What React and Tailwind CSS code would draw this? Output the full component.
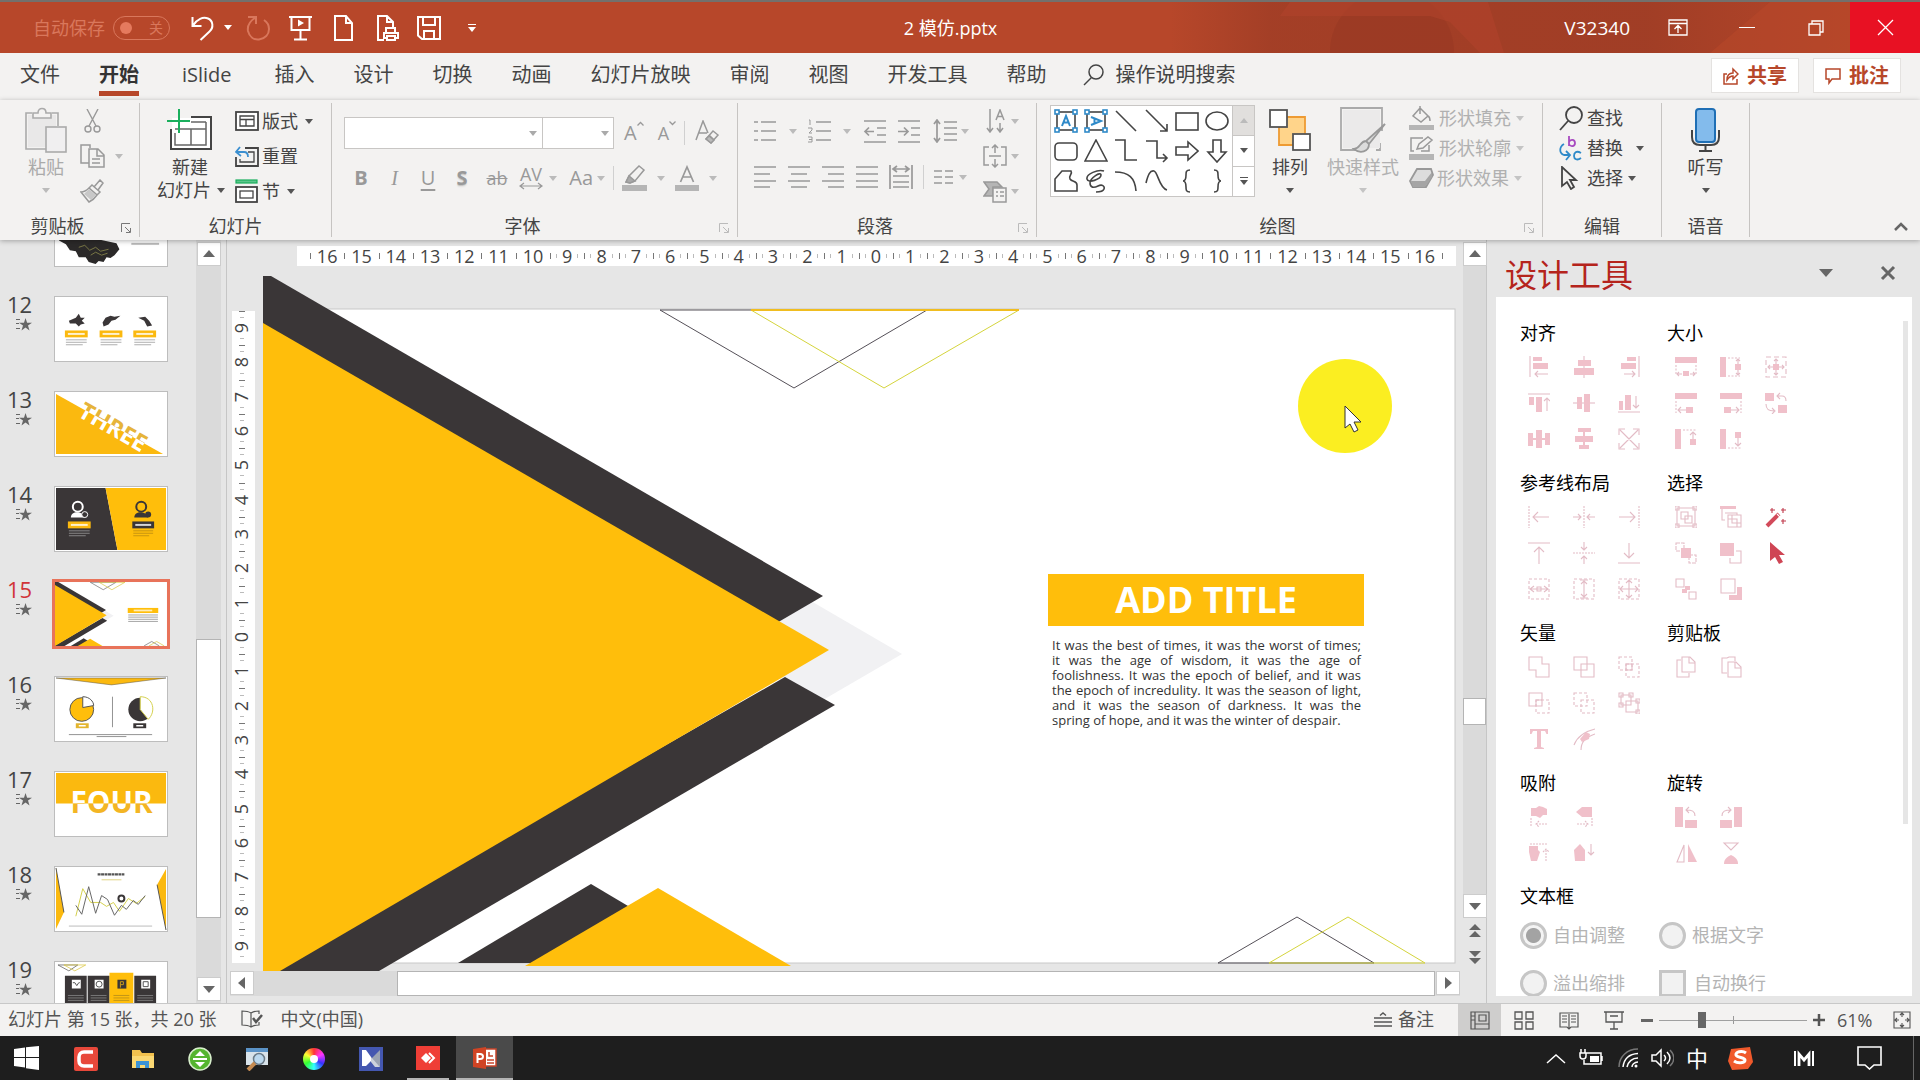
import { useState } from "react";

const TABS = ["文件", "开始", "iSlide", "插入", "设计", "切换", "动画", "幻灯片放映", "审阅", "视图", "开发工具", "帮助"];

function Svg({ w, h, vb, children, className = "", stroke = "currentColor", sw = 1.5, fill = "none" }) {
  return (
    <svg
      width={w}
      height={h}
      viewBox={vb || `0 0 ${w} ${h}`}
      fill={fill}
      stroke={stroke}
      strokeWidth={sw}
      className={`shrink-0 ${className}`}
      aria-hidden="true"
    >
      {children}
    </svg>
  );
}

function Caret({ className = "text-[#555]", up = false }) {
  return (
    <svg width="8" height="5" viewBox="0 0 8 5" className={`shrink-0 ${className}`} aria-hidden="true">
      <path d={up ? "M0 5h8L4 0z" : "M0 0h8L4 5z"} fill="currentColor" />
    </svg>
  );
}

/* ---------- title bar ---------- */

function TitleBar() {
  const [autoSave, setAutoSave] = useState(false);
  return (
    <header className="relative flex h-[53px] shrink-0 items-center border-t-2 border-[#73706c] bg-[#b7472a] text-white">
      <svg className="absolute top-0 right-[70px] h-full w-[680px]" viewBox="0 0 680 51" preserveAspectRatio="none" aria-hidden="true">
        <defs>
          <linearGradient id="fade" x1="0" x2="1">
            <stop offset="0" stopColor="#9d3c25" stopOpacity="0" />
            <stop offset="0.15" stopColor="#9d3c25" stopOpacity="0.75" />
            <stop offset="0.7" stopColor="#9d3c25" stopOpacity="0.85" />
            <stop offset="1" stopColor="#9d3c25" stopOpacity="0.1" />
          </linearGradient>
        </defs>
        <rect width="680" height="51" fill="url(#fade)" />
        <circle cx="222" cy="50" r="62" fill="#983923" opacity="0.6" />
        <path d="M110 14h150l20 6 30 31h24L318 0H120z" fill="#b0432b" opacity="0.6" />
        <path d="M540 51L600 0h80v51z" fill="#b7472a" opacity="0.6" />
      </svg>
      <div className="relative flex flex-1 items-center pl-[33px]">
        <label htmlFor="autosave" className="text-lg leading-6 text-[#d9775c]">自动保存</label>
        <button
          id="autosave"
          onClick={() => setAutoSave(!autoSave)}
          className="ml-2 flex h-6 w-[57px] items-center justify-between rounded-full border border-[#d9775c] px-1.5 text-sm text-[#d9775c]"
        >
          <span className="h-3 w-3 rounded-full bg-[#e57a5e]" />
          {autoSave ? "开" : "关"}
        </button>
        <button aria-label="撤销" className="ml-[21px] flex items-center gap-2.5">
          <Svg w={23} h={26} sw={2}><path d="M1.500 2v9h9M2 10.500C6 4 12 1.500 17 3.500s6 9 1.500 13L9.500 25" /></Svg>
          <Caret className="text-white" />
        </button>
        <button aria-label="重复" className="ml-[14px] text-[#d9775c]">
          <Svg w={25} h={26} sw={2}><path d="M2 2h8v7M9.500 2.500C4 6 1 10 2 16c1.500 6 6 9 11 8.500 6-1 10-5 10-10.500 0-4-2-7-5-9" /></Svg>
        </button>
        <button aria-label="从头开始" className="ml-[18px]">
          <Svg w={23} h={26} sw={2}><path d="M0 2h23M2.500 2v13h18V2M11.500 15v9M5 24.500h13" /><path d="M9 4.500v7l6-3.500z" fill="currentColor" stroke="none" /></Svg>
        </button>
        <button aria-label="新建" className="ml-[22px]">
          <Svg w={19} h={26} sw={2}><path d="M1 1h11l6 7v17H1zM12 1v7h6" /></Svg>
        </button>
        <button aria-label="快速打印" className="ml-[24px]">
          <Svg w={22} h={26} sw={2}><path d="M7 25H1V1h9l6 6v6M10 1v6h6M9 18v-5h9v5M9 23H7v-5h14v5h-2M10 21h8v4h-8z" /></Svg>
        </button>
        <button aria-label="保存" className="ml-[18px]">
          <Svg w={24} h={26} sw={2}><path d="M1 2h22v22H5l-4-3.500zM6 2v8h12V2M7 24v-8h10v8" /></Svg>
        </button>
        <button aria-label="自定义快速访问工具栏" className="ml-[27px] flex flex-col items-center gap-0.5">
          <span className="h-px w-2 bg-white" />
          <Caret className="text-white" />
        </button>
      </div>
      <h1 className="relative mr-[52px] text-lg leading-6">2 模仿.pptx</h1>
      <div className="relative flex h-full flex-1 items-center justify-end">
        <span className="text-[19px] leading-6">V32340</span>
        <button aria-label="功能区显示选项" className="ml-[38px]">
          <Svg w={20} h={17} sw={1.3}><path d="M1 1h18v15H1zM1 4.500h18M10 14V7M6.500 10L10 6.500l3.500 3.500" /></Svg>
        </button>
        <button aria-label="最小化" className="ml-[51px] flex h-6 w-4 items-center"><span className="block h-px w-full bg-white" /></button>
        <button aria-label="向下还原" className="ml-[53px]">
          <Svg w={16} h={16} sw={1.3}><path d="M1 4h11v11H1zM4 4V1h11v11h-3" /></Svg>
        </button>
        <button aria-label="关闭" className="ml-[26px] flex h-full w-[70px] items-center justify-center bg-[#e81123]">
          <Svg w={17} h={17} sw={1.3}><path d="M1 1l15 15M16 1L1 16" /></Svg>
        </button>
      </div>
    </header>
  );
}

function TabRow() {
  const [active, setActive] = useState("开始");
  return (
    <nav className="flex h-[47px] shrink-0 items-start bg-[#f3f2f1] pl-5 text-xl text-[#444]">
      <div className="flex gap-[39px] pt-1.5">
        {TABS.map((t) => (
          <button
            key={t}
            onClick={() => setActive(t)}
            className={`border-b-[5px] leading-8 ${t === "iSlide" ? "mx-1" : ""} ${
              t === active ? "border-[#b7472a] font-bold text-[#333]" : "border-transparent"
            }`}
          >
            {t}
          </button>
        ))}
      </div>
      <button className="ml-9 flex items-center gap-3 pt-1.5 leading-8">
        <Svg w={21} h={22} sw={1.5}><circle cx="13" cy="8" r="7" /><path d="M8.500 13.500L1 21" /></Svg>
        操作说明搜索
      </button>
      <div className="ml-auto flex gap-[14px] pt-[5px] pr-[19px] font-bold text-[#b7472a]">
        <button className="flex h-[35px] w-[88px] items-center justify-center gap-2 border border-[#e4e2e0] bg-white">
          <Svg w={16} h={18} sw={1.5}><path d="M4 7H1v10h13v-5M4 13c0-5 2-7 6-7V2l5 5-5 5V9c-3 0-4 1-6 4z" /></Svg>
          共享
        </button>
        <button className="flex h-[35px] w-[88px] items-center justify-center gap-2 border border-[#e4e2e0] bg-white">
          <Svg w={16} h={18} sw={1.5}><path d="M1 2h14v10H7l-3 4v-4H1z" /></Svg>
          批注
        </button>
      </div>
    </nav>
  );
}

/* ---------- ribbon ---------- */

function Group({ label, width, launcher, dim = true, children }) {
  return (
    <section className={`flex shrink-0 flex-col pt-[3px] ${width}`}>
      <div className="flex min-h-0 flex-1 flex-col border-r border-[#c6c4c2]">
        <div className="flex-1">{children}</div>
        <div className={`relative h-[23px] text-center text-lg leading-6 text-[#444] ${launcher ? "pr-6" : ""}`}>
          {label}
          {launcher && (
            <button aria-label={`${label}设置`} className={`absolute right-2 bottom-1 ${dim ? "text-[#bbb]" : "text-[#777]"}`}>
              <Svg w={10} h={10} sw={1}><path d="M.5 9V.5H9M4 4l5 5M9.500 5v4.500H5" /></Svg>
            </button>
          )}
        </div>
      </div>
    </section>
  );
}

function BigButton({ icon, lines, caret, color = "text-[#444]", className = "" }) {
  return (
    <button className={`flex shrink-0 flex-col items-center self-start pt-[5px] text-lg leading-[23px] ${color} ${className}`}>
      <span className="mb-1 flex h-11 items-center">{icon}</span>
      <span className="whitespace-nowrap">{lines}</span>
      {caret && <span className="flex h-[23px] items-center"><Caret className={caret} /></span>}
    </button>
  );
}

function RowButton({ icon, text, caret, color = "text-[#444]", gap = "gap-1" }) {
  return (
    <button className={`flex h-[30px] items-center whitespace-nowrap text-lg leading-6 ${gap} ${color}`}>
      {icon}
      <span>{text}</span>
      {caret && <Caret className={caret} />}
    </button>
  );
}

function ClipboardGroup() {
  return (
    <Group label="剪贴板" width="w-[140px]" launcher dim={false}>
      <div className="flex pl-[25px]">
        <BigButton
          color="text-[#aaa]"
          lines="粘贴"
          caret="text-[#bbb]"
          icon={
            <Svg w={42} h={46} sw={1.6}>
              <path d="M7 6H1v36h20M27 6h6v13" />
              <path d="M3 8h28v12H21v20H3z" fill="#e9e8e8" stroke="none" />
              <path d="M8 11V6h5c0-6 8-6 8 0h5v5z" fill="#f3f2f1" />
              <rect x="21" y="20" width="20" height="25" fill="#f0eff0" />
            </Svg>
          }
        />
        <div className="flex flex-col gap-[11px] pt-1.5 pl-[13px] text-[#999]">
          <button aria-label="剪切" className="flex h-6 w-6 justify-center">
            <Svg w={17} h={24} sw={1.4}><path d="M3 0l9 17M14 0L5 17" /><circle cx="4" cy="20" r="3" /><circle cx="13" cy="20" r="3" /></Svg>
          </button>
          <button aria-label="复制" className="flex h-6 items-center gap-2.5">
            <Svg w={25} h={24} sw={1.5}><path d="M9 19H1V1h9v3M9 5h9l6 6v12H9zM17 5v7h7M12 15h8M12 19h8" /></Svg>
            <Caret className="text-[#bbb]" />
          </button>
          <button aria-label="格式刷" className="flex h-6">
            <Svg w={24} h={24} sw={1.5}><path d="M1 13c4 0 6-2 8-4l8 7c-2 3-4 5-8 7zM9 9l3-3 8 7-3 3M14 8l6-7 3 3-5 7" /><path d="M4 15l7 6 5-5-7-6z" fill="#c8c8c8" stroke="none" /></Svg>
          </button>
        </div>
      </div>
    </Group>
  );
}

function SlidesGroup() {
  return (
    <Group label="幻灯片" width="w-[192px]">
      <div className="flex pl-[15px]">
        <BigButton
          lines={
            <>
              新建
              <span className="flex items-center gap-1.5 pl-0.5">幻灯片 <Caret /></span>
            </>
          }
          icon={
            <Svg w={46} h={42} sw={2}>
              <rect x="5" y="9" width="39" height="31" fill="#fff" stroke="none" />
              <path d="M24 8h20v32H4V20" stroke="#444" />
              <path d="M24 13h15M8 20h31M24 20v16M8 24v12h31V13" stroke="#666" strokeWidth="1.500" />
              <path d="M0 12h23M12 0v24" stroke="#1aaf5d" />
            </Svg>
          }
        />
        <div className="flex flex-col gap-[5px] pt-[3px] pl-2.5">
          <RowButton
            text="版式"
            gap="gap-[3px]"
            caret="ml-1 text-[#555]"
            icon={<Svg w={24} h={20} sw={1.8}><rect x="1" y="1" width="22" height="18" fill="#fff" /><path d="M5 5h14v10H5zM5 8.500h14M11 8.500V15" strokeWidth="1.300" /></Svg>}
          />
          <RowButton
            text="重置"
            gap="gap-[3px]"
            icon={
              <Svg w={24} h={21} sw={1.8}>
                <path d="M10 2h13v18H1v-9" /><path d="M13 6h6v10H5v-3" strokeWidth="1.300" />
                <path d="M1 6h8c3 0 4 2 4 5M5 1L1 6l5 4" stroke="#3b8fd0" />
              </Svg>
            }
          />
          <RowButton
            text="节"
            gap="gap-[3px]"
            caret="ml-1 text-[#555]"
            icon={<Svg w={24} h={24} sw={1.8}><rect x="1" y="1" width="21" height="3" fill="#5dc58c" stroke="#1aaf5d" strokeWidth="1.200" /><rect x="1" y="8" width="21" height="15" fill="#fff" /><rect x="5" y="12" width="13" height="7" strokeWidth="1.300" /></Svg>}
          />
        </div>
      </div>
    </Group>
  );
}

function FontGroup() {
  return (
    <Group label="字体" width="w-[406px]" launcher>
      <div className="flex flex-col gap-[15px] pt-3.5 pl-3 text-[#999]">
        <div className="flex h-8 items-center">
          <span className="relative flex items-center">
            <select aria-label="字体" className="h-8 w-[199px] appearance-none border border-[#c8c6c4] bg-white"><option /></select>
            <Caret className="pointer-events-none absolute right-[6px] text-[#aaa]" />
          </span>
          <span className="relative -ml-px flex items-center">
            <select aria-label="字号" className="h-8 w-[72px] appearance-none border border-[#c8c6c4] bg-white"><option /></select>
            <Caret className="pointer-events-none absolute right-[5px] text-[#aaa]" />
          </span>
          <button aria-label="增大字号" className="ml-2.5 flex text-xl leading-6">A<Svg w={7} h={5} sw={1.3}><path d="M.5 4.500l3-3 3 3" /></Svg></button>
          <button aria-label="减小字号" className="ml-3.5 flex text-lg leading-6">A<Svg w={7} h={5} sw={1.3}><path d="M.5 .5l3 3 3-3" /></Svg></button>
          <span className="ml-2 h-6 w-px bg-[#d0d0d0]" />
          <button aria-label="清除格式" className="ml-2.5">
            <Svg w={25} h={26} sw={1.5}><path d="M1 20L8 1l5 12M4 13h8" /><path d="M11 19l7-8 5 4-7 8zM14 15l5 5" /><path d="M11 19l3-3 5 4-3 3z" fill="#bbb" /></Svg>
          </button>
        </div>
        <div className="flex h-7 items-center text-xl leading-6">
          <button className="w-[34px] font-bold">B</button>
          <button className="w-[33px] font-['Liberation_Serif',serif] italic">I</button>
          <button className="w-[34px] underline underline-offset-4">U</button>
          <button className="w-[34px] font-bold text-shadow-sm">S</button>
          <button className="w-[36px] text-lg line-through">ab</button>
          <button className="flex w-[42px] items-center justify-between pl-1 text-lg leading-4">
            <span className="flex flex-col">AV<Svg w={24} h={8} sw={1.2}><path d="M1 4h22M5 1L1 4l4 3M19 1l4 3-4 3" /></Svg></span>
            <Caret className="text-[#bbb]" />
          </button>
          <button className="flex w-[48px] items-center justify-end gap-1">Aa<Caret className="text-[#bbb]" /></button>
          <span className="mx-2 h-6 w-px bg-[#d0d0d0]" />
          <button aria-label="突出显示" className="flex items-center gap-2.5">
            <Svg w={25} h={26} sw={1.5}><path d="M4 17l3-6L17 1l5 4-9 11-5 2z" /><path d="M4 17l3-6 6 5-5 2z" fill="#aaa" /><rect y="20" width="25" height="6" fill="#b5b5b5" stroke="none" /></Svg>
            <Caret className="text-[#bbb]" />
          </button>
          <button aria-label="字体颜色" className="ml-2.5 flex items-center gap-2.5">
            <Svg w={24} h={26} sw={1.7}><path d="M5.500 17L12 2l6.500 15M8 12h8" /><rect y="20" width="24" height="6" fill="#b5b5b5" stroke="none" /></Svg>
            <Caret className="text-[#bbb]" />
          </button>
        </div>
      </div>
    </Group>
  );
}

function Lines({ d, children }) {
  return <Svg w={24} h={24} sw={1.7}><path d={d} />{children}</Svg>;
}

function ParagraphGroup() {
  return (
    <Group label="段落" width="w-[299px]" launcher>
      <div className="flex pl-[15px] text-[#999]">
        <div className="flex w-[226px] flex-col gap-[22px] pt-4">
          <div className="flex items-center">
            <button aria-label="项目符号" className="flex w-[54px] items-center gap-3">
              <Lines d="M8 3h15M8 12h15M8 21h15M1 3h4M1 12h4M1 21h4" /><Caret className="text-[#bbb]" />
            </button>
            <button aria-label="编号" className="flex w-[56px] items-center gap-3">
              <Lines d="M9 3h15M9 12h15M9 21h15"><path d="M2 1h1v5M1 9h4v2l-3 3h3M1 18h4v5H1M2 20.500h3" strokeWidth="1" /></Lines><Caret className="text-[#bbb]" />
            </button>
            <button aria-label="减少缩进" className="mr-2.5"><Lines d="M1 2h22M14 9h9M14 16h9M1 23h22M11 12.500H2M6 8.500l-4 4 4 4" /></button>
            <button aria-label="增加缩进" className="mr-3"><Lines d="M1 2h22M14 9h9M14 16h9M1 23h22M1 12.500h9M7 8.500l4 4-4 4" /></button>
            <button aria-label="行距" className="flex items-center gap-1">
              <Lines d="M11 3h13M11 9h13M11 15h13M11 21h13M4 1v22M1 5l3-4 3 4M1 19l3 4 3-4" /><Caret className="text-[#bbb]" />
            </button>
          </div>
          <div className="flex items-center gap-[10px]">
            <button aria-label="左对齐"><Lines d="M1 2h22M1 9h16M1 16h22M1 22h16" /></button>
            <button aria-label="居中"><Lines d="M1 2h22M4 9h16M1 16h22M4 22h16" /></button>
            <button aria-label="右对齐"><Lines d="M1 2h22M7 9h16M1 16h22M7 22h16" /></button>
            <button aria-label="两端对齐"><Lines d="M1 2h22M1 9h22M1 16h22M1 22h22" /></button>
            <button aria-label="分散对齐"><Lines d="M1 0v24M23 0v24M4 11h16M4 17h16M4 22h16M4 4h16M8 1L4 4l4 3M16 1l4 3-4 3" /></button>
            <span className="h-6 w-px bg-[#d0d0d0]" />
            <button aria-label="分栏" className="flex items-center gap-1.5">
              <Svg w={19} h={16} sw={1.5}><path d="M0 2h8M0 8h8M0 14h8M11 2h8M11 8h8M11 14h8" /></Svg><Caret className="text-[#bbb]" />
            </button>
          </div>
        </div>
        <div className="flex flex-col gap-[11px] pt-1.5 pl-1">
          <button aria-label="文字方向" className="flex items-center gap-1">
            <Svg w={24} h={24} sw={1.5}><path d="M7 0v23M4 19l3 4 3-4M17 14v9M14 19l3 4 3-4M13 11l4-10 4 10M14.500 7.500h5" /></Svg><Caret className="text-[#bbb]" />
          </button>
          <button aria-label="对齐文本" className="flex items-center gap-1">
            <Svg w={24} h={24} sw={1.5}><path d="M6 3H1v18h5M18 3h5v18h-5M6 12h12M12 1v8M9 4l3-3 3 3M12 15v8M9 20l3 3 3-3" /></Svg><Caret className="text-[#bbb]" />
          </button>
          <button aria-label="转换为 SmartArt" className="flex items-center gap-1">
            <Svg w={24} h={24} sw={1.5}><path d="M1 3h13l5 5h-9v9H1l5-7z" fill="#b5b5b5" /><path d="M10 9h13v14H10zM13 13h2M17 13h4M13 17h2M17 17h4" fill="#f3f2f1" /></Svg><Caret className="text-[#bbb]" />
          </button>
        </div>
      </div>
    </Group>
  );
}

const SHAPES = [
  <g key="tb"><rect x="3" y="3" width="18" height="18" /><path d="M8 17l4-10 4 10M9.500 13.500h5" stroke="#2f8ac9" strokeWidth="2" /><g stroke="#2f8ac9" fill="#fff"><rect x="1" y="1" width="4" height="4" /><rect x="19" y="1" width="4" height="4" /><rect x="1" y="19" width="4" height="4" /><rect x="19" y="19" width="4" height="4" /></g></g>,
  <g key="vb"><rect x="3" y="3" width="18" height="18" /><path d="M7 8l10 4-10 4M10.500 9.500v5" stroke="#2f8ac9" strokeWidth="2" /><g stroke="#2f8ac9" fill="#fff"><rect x="1" y="1" width="4" height="4" /><rect x="19" y="1" width="4" height="4" /><rect x="1" y="19" width="4" height="4" /><rect x="19" y="19" width="4" height="4" /></g></g>,
  <path key="ln" d="M2 2l20 20" />,
  <path key="ar" d="M1 1l21 21M22 15v7h-7" />,
  <rect key="re" x="1" y="4" width="22" height="17" />,
  <ellipse key="el" cx="12" cy="12" rx="11" ry="9" />,
  <rect key="rr" x="1" y="4" width="22" height="17" rx="4" />,
  <path key="tr" d="M12 1l11 21H1z" />,
  <path key="el1" d="M1 1h10v20h12" />,
  <path key="el2" d="M1 2h11v17h10M18 15l4 4-4 4" />,
  <path key="ra" d="M1 8h12V3l10 9-10 9v-5H1z" />,
  <path key="da" d="M8 1v12H3l9 10 9-10h-5V1z" />,
  <path key="ff" d="M1 22V10l7-8h9c2 3-3 5-1 8s7 2 7 6v6z" />,
  <path key="sc" d="M20 2C14 0 2 5 3 10s14 0 14-4S6 9 6 14s4 5 8 3 7 0 6 3-6 3-8 3" />,
  <path key="cv" d="M1 3c14 0 20 6 21 19" />,
  <path key="wv" d="M1 14C3 6 5 1 9 2s5 17 13 19" />,
  <path key="lb" d="M15 1c-4 0-4 2-4 5s0 6-3 6c3 0 3 3 3 6s0 5 4 5" />,
  <path key="rb" d="M9 1c4 0 4 2 4 5s0 6 3 6c-3 0-3 3-3 6s0 5-4 5" />,
];

function DrawingGroup() {
  return (
    <Group label="绘图" width="w-[506px]" launcher>
      <div className="flex pl-[13px]">
        <div className="mt-0.5 flex h-[92px] w-[205px] border border-[#c8c6c4] bg-white">
          <div className="grid flex-1 grid-cols-6 place-items-center text-[#444]">
            {SHAPES.map((s, i) => (
              <button key={i} aria-label={`形状 ${i + 1}`}><Svg w={24} h={24} sw={1.6}>{s}</Svg></button>
            ))}
          </div>
          <div className="flex w-[22px] flex-col border-l border-[#c8c6c4]">
            <button aria-label="上一行" className="flex flex-1 items-center justify-center bg-[#e1dfdd]"><Caret up className="text-[#bbb]" /></button>
            <button aria-label="下一行" className="flex flex-1 items-center justify-center border-y border-[#c8c6c4]"><Caret /></button>
            <button aria-label="其他" className="flex flex-1 flex-col items-center justify-center gap-0.5"><span className="h-px w-2 bg-[#555]" /><Caret /></button>
          </div>
        </div>
        <BigButton
          className="ml-3.5"
          lines="排列"
          caret="text-[#555]"
          icon={<Svg w={42} h={42} sw={1.8}><path d="M16 8h20v28H10V16z" fill="#ffd48a" stroke="#ee9b33" /><rect x="1" y="1" width="17" height="17" fill="#fff" stroke="#555" /><rect x="24" y="25" width="17" height="16" fill="#fff" stroke="#555" /></Svg>}
        />
        <BigButton
          className="ml-4"
          color="text-[#b0b0b0]"
          lines="快速样式"
          caret="text-[#c4c4c4]"
          icon={<Svg w={46} h={46} sw={1.8} stroke="#aaa"><path d="M42 24V1H1v42h20M40 36v7h-4" /><rect x="3" y="3" width="37" height="38" fill="#ebeaea" stroke="none" /><path d="M45 17L26 34l3 3zM26 34c-6 0-6 8-12 8 6 5 15 3 15-5z" fill="#dcdcdc" stroke="#999" /></Svg>}
        />
        <div className="flex flex-col pl-2.5">
          <RowButton color="text-[#b0b0b0]" gap="gap-[5px]" text="形状填充" caret="text-[#c4c4c4]"
            icon={<Svg w={25} h={24} sw={1.5}><path d="M11 2l8 8-7 6-8-6zM11 0v8M19 10c2 1 2 3 2 5" stroke="#999" /><rect y="19" width="25" height="5" fill="#b5b5b5" stroke="none" /></Svg>} />
          <RowButton color="text-[#b0b0b0]" gap="gap-[5px]" text="形状轮廓" caret="text-[#c4c4c4]"
            icon={<Svg w={25} h={24} sw={1.5}><path d="M14 2H2v13h3M20 9v6h-8M8 13l2-5L19 1l4 3-9 8z" stroke="#999" /><rect y="18" width="25" height="6" fill="#b5b5b5" stroke="none" /></Svg>} />
          <RowButton color="text-[#b0b0b0]" gap="gap-[3px]" text="形状效果" caret="ml-0.5 text-[#c4c4c4]"
            icon={<Svg w={25} h={22} sw={1.8}><path d="M1 14L8 2h14l2 6-7 12H4z" stroke="#999" fill="#ddd" /><path d="M2 14h14l7-9v5l-7 10H4z" fill="#a5a5a5" stroke="none" /></Svg>} />
        </div>
      </div>
    </Group>
  );
}

function EditGroups() {
  return (
    <>
      <Group label="编辑" width="w-[119px]">
        <div className="flex flex-col pl-4">
          <RowButton text="查找" gap="gap-[3px]" icon={<Svg w={25} h={25} sw={1.8}><circle cx="15" cy="9" r="8" /><path d="M9 15L1 24" /></Svg>} />
          <RowButton
            text="替换"
            gap="gap-[3px]"
            caret="ml-2.5 text-[#555]"
            icon={
              <Svg w={25} h={26} sw={1.8}>
                <path d="M10 1v10M10 7c1-3 6-3 6 1s-5 4-6 1" stroke="#a84bc0" />
                <path d="M22 18c-5-3-7 0-7 3s3 5 7 2M5 9c-5 3-5 9 0 11h5M7 16l4 4-4 5" stroke="#2f8ac9" />
              </Svg>
            }
          />
          <RowButton text="选择" gap="gap-[3px]" caret="ml-0.5 text-[#555]" icon={<Svg w={25} h={24} sw={1.8}><path d="M3 1v19l5-4 4 7 3-2-4-7h6z" /></Svg>} />
        </div>
      </Group>
      <Group label="语音" width="w-[88px]">
        <div className="flex justify-center">
          <BigButton
            lines="听写"
            caret="text-[#555]"
            icon={<Svg w={30} h={44} sw={2}><rect x="5" y="1" width="19" height="33" rx="3" fill="#83bbec" stroke="#1f6fb5" /><path d="M1 22v7c0 5 3 8 8 8h11c5 0 8-3 8-8v-7M14.500 37v6M8 43h13" stroke="#444" /></Svg>}
          />
        </div>
      </Group>
    </>
  );
}

function Ribbon() {
  return (
    <div className="relative z-10 flex h-[140px] shrink-0 bg-[#f3f2f1] pb-[3px] shadow-[0_1px_5px_rgba(0,0,0,0.3)]">
      <ClipboardGroup />
      <SlidesGroup />
      <FontGroup />
      <ParagraphGroup />
      <DrawingGroup />
      <EditGroups />
      <button aria-label="折叠功能区" className="mt-auto mr-3 mb-1.5 ml-auto text-[#666]">
        <Svg w={14} h={9} sw={2.5}><path d="M1 8l6-6 6 6" /></Svg>
      </button>
    </div>
  );
}

/* ---------- slide drawing, shared by the canvas and the thumbnail ---------- */

function SlideArt() {
  return (
    <>
      <rect x="294" y="309" width="1161" height="654" fill="#fff" stroke="#c8c8c8" />
      <path d="M902 654L780 583v142z" fill="#f1f1f3" />
      <path d="M263 276h8L823 596l-60 35L263 340z" fill="#3a3637" />
      <path d="M785 677l50 28L379 971H270z" fill="#3a3637" />
      <path d="M263 323L829 650 280 971h-17z" fill="#ffbe0b" />
      <path d="M458 963l133-79 133 79z" fill="#3a3637" />
      <path d="M525 966l133-78 133 78z" fill="#ffbe0b" />
      <path d="M660 310h267L794 388z" fill="none" stroke="#555058" />
      <path d="M751 310h268L884 388z" fill="none" stroke="#d4d43c" />
      <path d="M751 310h268" stroke="#f0bd20" strokeWidth="2" />
      <path d="M1218 963l79-46 77 46z" fill="none" stroke="#555058" />
      <path d="M1269 963l79-46 77 46z" fill="none" stroke="#d4d43c" />
    </>
  );
}

/* ---------- thumbnails ---------- */

function Caption({ x, y, w, fill, line = "#999" }) {
  return (
    <>
      <rect x={x} y={y} width={w} height="7" fill={fill} />
      <path d={`M${x + 3} ${y + 3.5}h${w - 6}`} stroke="#fff" strokeOpacity="0.8" strokeWidth="2" />
      <path d={`M${x + 1} ${y + 9.5}h${w - 2}M${x + 1} ${y + 12}h${w - 2}M${x + 1} ${y + 14.500}h${w - 6}`} stroke={line} strokeWidth="0.800" />
    </>
  );
}

const THUMBS = [
  {
    n: 11,
    art: (
      <>
        <path d="M8 34l10 3 14-2 12 3 18 4 3 6-5 6-4 3-4-1-3 5-5-1-3 3-7-2-3-5-7 0-3-6-6-1-4-6-7-4z" fill="#2b2929" />
        <path d="M24 46l6-2 5 5 6-3 5 4 8-2M36 54l5-3 6 3 6-2" stroke="#8d8a4c" strokeWidth="0.800" fill="none" />
        <path d="M77 42.500h28" stroke="#bbb" strokeWidth="2" />
      </>
    ),
  },
  {
    n: 12,
    art: (
      <>
        <path d="M14 24l7-3 3-4 2 4 4 0-3 3 3 3-4 1-2 2-3-3-6 0z" fill="#3a3637" />
        <path d="M48 26l3-5 5-2 4 1 6-1-5 4-4 1-3 4-5 2z" fill="#3a3637" />
        <path d="M84 21l7-1 4 4 3 5-5 1-3-6z" fill="#3a3637" />
        <Caption x={10} y={34} w={23} fill="#fbb90f" />
        <Caption x={45} y={34} w={23} fill="#fbb90f" />
        <Caption x={79} y={34} w={23} fill="#fbb90f" />
      </>
    ),
  },
  {
    n: 13,
    art: (
      <>
        <defs>
          <clipPath id="lower"><path d="M0 1L110 63H0z" /></clipPath>
        </defs>
        <path d="M1 2l108 61H1z" fill="#fbb90f" />
        <g fontSize="24" fontWeight="bold">
          <text transform="translate(22 24) rotate(30)" fill="#e6b43a">THREE</text>
          <g clipPath="url(#lower)"><text transform="translate(22 24) rotate(30)" fill="#fff">THREE</text></g>
        </g>
      </>
    ),
  },
  {
    n: 14,
    art: (
      <>
        <path d="M1 1h50l12 63H1z" fill="#3a3637" />
        <path d="M51 1h61v63H63z" fill="#ffbe0b" />
        <circle cx="23" cy="20" r="5" fill="none" stroke="#fff" strokeWidth="2" />
        <path d="M16 31c0-7 12-7 14 0z" fill="#fff" />
        <circle cx="30" cy="28" r="3" fill="#3a3637" stroke="#fff" />
        <circle cx="87" cy="20" r="5" fill="#ffbe0b" stroke="#3a3637" strokeWidth="2" />
        <path d="M80 31c0-7 12-7 14 0z" fill="#3a3637" />
        <circle cx="94" cy="28" r="3" fill="#3a3637" />
        <Caption x={13} y={35} w={23} fill="#fbb90f" />
        <Caption x={78} y={35} w={22} fill="#3a3637" line="#b98a12" />
      </>
    ),
  },
  {
    n: 15,
    view: "294 309 1161 654",
    art: (
      <>
        <SlideArt />
        <rect x="1048" y="574" width="316" height="52" fill="#ffbe0b" />
        <path d="M1110 600h192" stroke="#fff" strokeWidth="18" strokeOpacity="0.7" />
        <path d="M1053 646h308M1053 668h308M1053 690h308M1053 712h308" stroke="#999" strokeWidth="9" />
        <path d="M660 312h267L794 388zM1218 961l79-44 77 44" fill="none" stroke="#777" strokeWidth="7" />
        <path d="M751 312h268L884 388zM1269 961l79-44 77 44" fill="none" stroke="#dcc94a" strokeWidth="7" />
      </>
    ),
  },
  {
    n: 16,
    art: (
      <>
        <path d="M1 1h111L57 8z" fill="#fbb90f" stroke="#555" strokeWidth="0.500" />
        <circle cx="27" cy="33" r="12" fill="#ffbe0b" stroke="#555" />
        <path d="M28 31V20c7 0 11 5 11 9z" fill="#fff" stroke="#555" />
        <circle cx="86" cy="33" r="12" fill="#3a3637" />
        <path d="M86 33V20c14 0 16 16 8 23z" fill="#fff" stroke="#d3cf4c" />
        <path d="M58 20v31M14 58.500h84M42 60.500h30" stroke="#777" strokeWidth="0.800" />
        <rect x="21" y="47" width="13" height="5" fill="#e3b52f" />
        <rect x="79" y="47" width="13" height="5" fill="#3a3637" />
        <path d="M24 49.500h7M82 49.500h7" stroke="#fff" strokeWidth="1.500" />
      </>
    ),
  },
  {
    n: 17,
    art: (
      <>
        <defs>
          <clipPath id="upperHalf"><path d="M0 0h113v32H0z" /></clipPath>
          <clipPath id="lowerHalf"><path d="M0 32h113v33H0z" /></clipPath>
        </defs>
        <path d="M1 1h111v31H1z" fill="#fbb90f" />
        <g fontSize="30" fontWeight="bold" textAnchor="middle">
          <g clipPath="url(#upperHalf)"><text x="57" y="42" fill="#fff">FOUR</text></g>
          <g clipPath="url(#lowerHalf)"><text x="57" y="42" fill="#f3b524">FOUR</text></g>
        </g>
      </>
    ),
  },
  {
    n: 18,
    art: (
      <>
        <path d="M1 1l8 45-8 17z" fill="#fbb90f" />
        <path d="M1 1l8 45" stroke="#555" />
        <path d="M112 2l-9 16 9 46z" fill="#fbb90f" />
        <path d="M103 18l9 46" stroke="#555" />
        <path d="M43 7.500h27" stroke="#555" strokeWidth="2.500" strokeDasharray="3 0.500" />
        <path d="M47 13h20" stroke="#d8c866" strokeWidth="0.800" />
        <path d="M21 50l7-28 8 14 10 0 6 4 7-4 6 9 9-13 8 5 9-7" fill="none" stroke="#d3cf4c" />
        <path d="M21 39l6 9 7-28 7 27 6-18 6 4 7 16 7-10 5 4 7-9 5 4 7-9" fill="none" stroke="#666" />
        <circle cx="67" cy="32" r="3" fill="#fff" stroke="#3a3637" strokeWidth="2" />
        <path d="M14 60h84" stroke="#aaa" strokeWidth="0.800" />
      </>
    ),
  },
  {
    n: 19,
    art: (
      <>
        <path d="M3 3h20L14 9z" fill="none" stroke="#666" strokeWidth="0.800" />
        <path d="M9 3h22L20 9z" fill="none" stroke="#dcc94a" strokeWidth="0.800" />
        <path d="M10 14h22v42H10zM33 14h22v42H33zM80 14h22v42H80z" fill="#3a3637" />
        <path d="M55 11h24v45H55z" fill="#ffbe0b" />
        <path d="M17 18h9v9h-9zM40 18h9v9h-9zM87 18h9v9h-9z" fill="#fff" />
        <path d="M18 21h2l2 3 2-3h1M89 25v-5l5 0v5z" stroke="#555" fill="none" />
        <circle cx="44.500" cy="22.500" r="3" stroke="#555" fill="none" />
        <path d="M63 18h9v9h-9z" fill="#3a3637" />
        <path d="M66 26v-6h3v3h-3" stroke="#c99a1c" fill="none" />
        <path d="M13 34h16M13 36.500h16M13 39h16M36 34h16M36 36.500h16M36 39h16M83 34h16M83 36.500h16M83 39h16" stroke="#888" strokeWidth="0.800" />
        <path d="M59 34h16M59 36.500h16M59 39h16" stroke="#b38c1a" strokeWidth="0.800" />
      </>
    ),
  },
];

function ArrowBox({ dir, label, className = "" }) {
  const d = { up: "M0 9h12L6 2z", down: "M0 3h12l-6 7z", left: "M9 0v12L2 6z", right: "M3 0v12l7-6z" }[dir];
  return (
    <button aria-label={label} className={`flex h-6 w-6 shrink-0 items-center justify-center border border-[#ccc] bg-white ${className}`}>
      <svg width="12" height="12" viewBox="0 0 12 12" aria-hidden="true"><path d={d} fill="#666" /></svg>
    </button>
  );
}

function ThumbPanel() {
  const [current, setCurrent] = useState(15);
  return (
    <aside className="flex w-[227px] shrink-0 border-r border-[#c6c6c6]">
      <ol className="min-h-0 flex-1 overflow-hidden">
        {THUMBS.map((t, i) => (
          <li key={t.n} className={`flex h-[95px] items-start ${i === 0 ? "-mt-[41px]" : ""}`}>
            <div className={`w-[52px] pl-[7px] text-[22px] leading-5 ${t.n === current ? "text-[#d13438]" : "text-[#444]"}`}>
              {/* the first row is scrolled half out, its number with it */}
              {i > 0 && (
                <>
                  {t.n}
                  <Svg w={16} h={13} className="mt-1 ml-[9px] text-[#666]" fill="currentColor" stroke="none">
                    <path d="M9.500 0l1.600 4.700H16l-4 2.900 1.500 4.900-4-3-4 3L7 7.600 3 4.700h5z" /><path d="M0 1h4v1H0zM0 5h3v1H0zM0 10h4v1H0z" />
                  </Svg>
                </>
              )}
            </div>
            <button
              aria-label={`幻灯片 ${t.n}`}
              onClick={() => setCurrent(t.n)}
              className={t.n === current ? "border-[3px] border-[#e8735a] bg-white" : "mt-[2px] ml-[2px] border border-[#bdbdbd] bg-white"}
            >
              <svg width="112" height="64" viewBox={t.view || "0 0 113 65"} preserveAspectRatio="none" aria-hidden="true">{t.art}</svg>
            </button>
          </li>
        ))}
      </ol>
      <div className="mr-[5px] flex w-[25px] flex-col items-center bg-[#dadada] pt-0.5 pb-0.5">
        <ArrowBox dir="up" label="向上滚动" />
        <div className="mt-[373px] h-[279px] w-full border border-[#b4b4b4] bg-white" />
        <ArrowBox dir="down" label="向下滚动" className="mt-auto" />
      </div>
    </aside>
  );
}

/* ---------- slide canvas ---------- */

const H_MARKS = Array.from({ length: 33 }, (_, i) => Math.abs(i - 16));
const V_MARKS = Array.from({ length: 19 }, (_, i) => Math.abs(i - 9));

function HRuler() {
  return (
    <div className="ml-[70px] flex h-5 bg-white px-[13px] text-lg leading-[18px] text-[#444]">
      {H_MARKS.map((m, i) => (
        <span key={i} className="flex min-w-0 flex-1 items-center justify-between">
          <i className="h-1.5 w-px bg-[#777]" />
          {m < 10 && <i className="h-1 w-px bg-[#bbb]" />}
          <b className="font-normal">{m}</b>
          {m < 10 && <i className="h-1 w-px bg-[#bbb]" />}
          <i className="w-px" />
        </span>
      ))}
      <i className="h-1.5 w-px self-center bg-[#777]" />
    </div>
  );
}

function VRuler() {
  return (
    <div className="mt-[35px] mb-2 ml-[5px] flex w-[23px] flex-col bg-white text-lg text-[#444]">
      {V_MARKS.map((m, i) => (
        <span key={i} className="flex min-h-0 flex-1 flex-col items-center justify-between pr-1">
          <i className="h-px w-1.5 bg-[#777]" />
          <i className="h-px w-1 bg-[#bbb]" />
          <b className="flex h-2.5 -rotate-90 items-center font-normal">{m}</b>
          <i className="h-px w-1 bg-[#bbb]" />
          <i className="h-px" />
        </span>
      ))}
    </div>
  );
}

function Canvas() {
  return (
    <div className="relative ml-2 min-w-0 flex-1 overflow-hidden">
      <svg className="absolute inset-0 h-full w-full" viewBox="263 276 1193 695" aria-hidden="true"><SlideArt /></svg>
      <div className="absolute top-[298px] left-[785px] w-[316px]">
        <h2 className="bg-[#ffbe0b] text-center text-4xl leading-[52px] font-bold text-white">ADD TITLE</h2>
        <p className="mt-3 pr-[3px] pl-1 text-justify text-[13px] leading-[15px] text-[#333]">
          It was the best of times, it was the worst of times; it was the age of wisdom, it was the age of foolishness. It was
          the epoch of belief, and it was the epoch of incredulity. It was the season of light, and it was the season of
          darkness. It was the spring of hope, and it was the winter of despair.
        </p>
      </div>
      <svg className="absolute top-[83px] left-[1035px]" width="95" height="95" viewBox="0 0 95 95" aria-hidden="true">
        <circle cx="47" cy="47" r="47" fill="#fbee21" />
        <path d="M47 47v22l5-4 4 8 4-2-4-8h7z" fill="#fff" stroke="#333" />
      </svg>
    </div>
  );
}

function Editor() {
  return (
    <main className="flex min-w-0 flex-1">
      <div className="flex min-w-0 flex-1 flex-col">
        <div className="pt-1.5 pr-1"><HRuler /></div>
        <div className="mt-2.5 flex min-h-0 flex-1 pr-1">
          <VRuler />
          <Canvas />
        </div>
        <div className="mb-[7px] ml-[3px] flex h-[25px] bg-[#dadada]">
          <ArrowBox dir="left" label="向左滚动" />
          <div className="ml-[143px] flex-1 border border-[#b4b4b4] bg-white" />
          <ArrowBox dir="right" label="向右滚动" className="ml-px" />
        </div>
      </div>
      <div className="mr-[2px] ml-[3px] flex w-6 flex-col items-center border-r border-[#c6c6c6] pt-0.5">
        <div className="flex h-[676px] w-full flex-col items-center bg-[#dadada]">
          <ArrowBox dir="up" label="向上滚动" />
          <div className="mt-[432px] h-[27px] w-full border border-[#b4b4b4] bg-white" />
          <ArrowBox dir="down" label="向下滚动" className="mt-auto" />
        </div>
        <button aria-label="上一张幻灯片" className="mt-1.5"><Svg w={12} h={13} stroke="none" fill="#666"><path d="M0 6h12L6 0zM0 13h12L6 7z" /></Svg></button>
        <button aria-label="下一张幻灯片" className="mt-3.5"><Svg w={12} h={13} stroke="none" fill="#666"><path d="M0 0h12L6 6zM0 7h12l-6 6z" /></Svg></button>
      </div>
    </main>
  );
}

/* ---------- design tools pane ---------- */

const fillP = { fill: "#f0c0ca", stroke: "none" };

const TOOLS = [
  {
    title: "对齐",
    icons: [
      <><path d="M2 0v21M20 18H7M10 15l-3 3 3 3" /><path d="M5 1h9v4H5zM5 7h15v6H5z" {...fillP} /></>,
      <><path d="M11 0v22" /><path d="M5 4h13v6H5zM1 12h20v7H1z" {...fillP} /></>,
      <><path d="M21 0v21M6 18h11M14 15l3 3-3 3" /><path d="M9 1h9v4H9zM3 7h15v6H3z" {...fillP} /></>,
      <><path d="M0 2h22M19 19V6M16 9l3-3 3 3" /><path d="M1 5h5v8H1zM8 5h6v15H8z" {...fillP} /></>,
      <><path d="M0 11h22" /><path d="M4 5h5v12H4zM11 2h6v18h-6z" {...fillP} /></>,
      <><path d="M0 20h22M18 4v12M15 13l3 3 3-3" /><path d="M1 9h4v9H1zM7 3h6v15H7z" {...fillP} /></>,
      <path d="M0 5h5v13H0zM8 2h6v18H8zM17 5h5v12h-5zM5 10h12v2H5z" {...fillP} />,
      <path d="M5 0h13v4H5zM2 8h18v6H2zM6 17h10v4H6zM10 4h2v13h-2z" {...fillP} />,
      <path d="M2 2l18 18M20 2L2 20M1 7V1h6M15 1h6v6M1 15v6h6M15 21h6v-6" />,
    ],
  },
  {
    title: "大小",
    icons: [
      <><path d="M0 1h22v6H0z" {...fillP} /><path d="M1 9v10M21 9v10" strokeDasharray="2 1.500" /><path d="M2 18h5M20 18h-5M4 16l-2 2 2 2M18 16l2 2-2 2" /><path d="M8 15h6v5H8z" {...fillP} /></>,
      <><path d="M0 1h6v20H0z" {...fillP} /><path d="M8 2h12M8 20h12" strokeDasharray="2 1.500" /><path d="M18 3v5M18 19v-5M16 5l2-2 2 2M16 17l2 2 2-2" /><path d="M15 8h6v6h-6z" {...fillP} /></>,
      <><path d="M1 1h20v20H1z" strokeDasharray="5 3" /><path d="M11 3v5M11 14v5M3 11h5M14 11h5M9 5l2-2 2 2M9 17l2 2 2-2M5 9l-2 2 2 2M17 9l2 2-2 2" /><path d="M8 8h6v6H8z" {...fillP} /></>,
      <><path d="M0 1h22v6H0z" {...fillP} /><path d="M1 9v12" strokeDasharray="2 1.500" /><path d="M3 18h8M6 15l-3 3 3 3" /><path d="M11 15h7v6h-7z" {...fillP} /></>,
      <><path d="M0 1h22v6H0z" {...fillP} /><path d="M21 9v12" strokeDasharray="2 1.500" /><path d="M11 18h8M16 15l3 3-3 3" /><path d="M4 15h7v6H4z" {...fillP} /></>,
      <><path d="M0 1h9v8H0zM13 13h9v8h-9z" {...fillP} /><path d="M12 4h5c3 0 4 2 4 5M15 1l-3 3 3 3M1 12c0 5 2 7 8 7M7 16l3 3-3 3" /></>,
      <><path d="M0 1h6v20H0z" {...fillP} /><path d="M8 2h13" strokeDasharray="2 1.500" /><path d="M18 11V4M15 7l3-3 3 3" /><path d="M15 11h6v6h-6z" {...fillP} /></>,
      <><path d="M0 1h6v20H0z" {...fillP} /><path d="M8 20h13" strokeDasharray="2 1.500" /><path d="M18 10v8M15 15l3 3 3-3" /><path d="M15 4h6v6h-6z" {...fillP} /></>,
    ],
  },
  {
    title: "参考线布局",
    icons: [
      <><path d="M1 0v22" strokeDasharray="2 1" /><path d="M21 11H5M10 6l-5 5 5 5" /></>,
      <><path d="M11 0v22" strokeDasharray="2 1" /><path d="M0 11h8M5 8l3 3-3 3M22 11h-8M17 8l-3 3 3 3" /></>,
      <><path d="M21 0v22" strokeDasharray="2 1" /><path d="M1 11h16M12 6l5 5-5 5" /></>,
      <path d="M0 1h22M11 22V5M6 10l5-5 5 5" />,
      <><path d="M0 11h22" strokeDasharray="2 1" /><path d="M11 0v8M8 5l3 3 3-3M11 22v-8M8 17l3-3 3 3" /></>,
      <path d="M0 21h22M11 1v15M6 11l5 5 5-5" />,
      <><path d="M1 1h20v20H1z" strokeDasharray="3 2" /><path d="M2 11h18M6 8l-4 3 4 3M16 8l4 3-4 3M9 9h4v4H9z" /></>,
      <><path d="M1 1h20v20H1z" strokeDasharray="3 2" /><path d="M11 2v18M7 2h8M7 20h8M8 6l3-3 3 3M8 16l3 3 3-3" /></>,
      <><path d="M1 1h20v20H1z" strokeDasharray="3 2" /><path d="M11 2v18M2 11h18M8 5l3-3 3 3M8 17l3 3 3-3M5 8l-3 3 3 3M17 8l3 3-3 3" /></>,
    ],
  },
  {
    title: "选择",
    icons: [
      <path d="M2 2h18v18H2zM6 6h7v7H6zM10 10h7v7h-7zM0 0h4v4H0zM18 0h4v4h-4zM0 18h4v4H0zM18 18h4v4h-4z" />,
      <><path d="M0 0h16v3H0z" {...fillP} /><path d="M2 3v11h3M5 7h12v2M8 9h13v12H8zM8 13h9v8M12 9v8h9" /></>,
      <><path d="M2 20L14 8" stroke="#d24a5a" strokeWidth="4" /><path d="M12 8l3 3" stroke="#fff" /><path d="M7 2v5M5 4h5M18 2v5M16 4h5M18 13v5M16 15h5" stroke="#c0394b" /></>,
      <><path d="M1 1h8v8H1zM14 13h7v8h-7z" strokeDasharray="4 1" /><path d="M6 6h10v10H6z" {...fillP} /></>,
      <><path d="M0 1h14v13H0z" {...fillP} /><path d="M16 9h5v12H10v-5" /></>,
      <path d="M5 0v19l5-4 4 7 4-2-4-7h6z" fill="#cf4554" stroke="none" />,
      <><path d="M1 1h8v8H1zM14 14h7v7h-7z" /><path d="M10 8h5v4h-5zM7 11h5v4H7z" {...fillP} /></>,
      <><path d="M1 1h14v14H1z" /><path d="M17 9h5v13H9v-5h8z" {...fillP} /></>,
    ],
  },
  {
    title: "矢量",
    icons: [
      <path d="M1 1h13v7h7v13H8v-7H1z" />,
      <path d="M1 1h13v13H1zM8 8h13v13H8z" />,
      <><path d="M1 1h13v13H1zM8 8h13v13H8z" strokeDasharray="3 2" /><path d="M8 8h6v6H8z" /></>,
      <><path d="M1 1h13v13H1z" /><path d="M8 8h13v13H8z" strokeDasharray="3 2" /><path d="M8 14V8h6" /></>,
      <path d="M1 1h13v13H1zM8 8h13v13H8z" strokeDasharray="3 2" />,
      <path d="M3 3h10v10H3zM8 9h12v11H8zM1 1h4v4H1zM11 1h4v4h-4zM1 11h4v4H1zM18 7h4v4h-4zM18 18h4v4h-4z" />,
      <><path d="M2 1h18v5h-1.500L17 3h-4v16l3 1v1H6v-1l3-1V3H5L3.500 6H2z" {...fillP} /></>,
      <><path d="M1 17C4 9 10 4 22 1M8 22c0-7 3-12 14-16" /><path d="M7 11l6-7 4 2-1 5-7 3z" {...fillP} /></>,
    ],
  },
  {
    title: "剪贴板",
    icons: [
      <path d="M7 1h8l5 5v10H7zM14 1v6h6M6 4H2v17h12v-4" />,
      <path d="M8 6h8l5 5v10H8zM15 6v6h6M7 17H2V2h5l2-1h6v4" />,
    ],
  },
  {
    title: "吸附",
    cols: "grid-cols-2 w-[90px]",
    icons: [
      <><path d="M3 2h5l3-2 4 1 4 2v6h-4l-3 3-4-2H3z" {...fillP} /><path d="M3 12v9M19 18H8M11 15l-3 3 3 3" strokeDasharray="2 1" /></>,
      <><path d="M3 6l6-5h10v10H9z" {...fillP} /><path d="M19 12v9M4 18h11M12 15l3 3-3 3" strokeDasharray="2 1" /></>,
      <><path d="M1 4h9v4l2 2-3 9H3L1 10z" {...fillP} /><path d="M2 2h18M18 19V7M15 10l3-3 3 3" strokeDasharray="2 1" /></>,
      <><path d="M1 8l6-6 5 6v11H2z" {...fillP} /><path d="M18 2v11M15 10l3 3 3-3" /></>,
    ],
  },
  {
    title: "旋转",
    cols: "grid-cols-2 w-[90px]",
    icons: [
      <><path d="M0 1h8v20H0zM10 14h12v8H10z" {...fillP} /><path d="M20 10c0-5-3-6-9-6M14 1l-3 3 3 3" /></>,
      <><path d="M14 1h8v20h-8zM0 14h12v8H0z" {...fillP} /><path d="M2 10c0-5 3-6 9-6M8 1l3 3-3 3" /></>,
      <><path d="M9 3v17H2z" /><path d="M13 2v18h9z" {...fillP} /></>,
      <><path d="M4 1h14l-7 7z" /><path d="M4 22h14c0-5-3-7-7-9-4 2-7 4-7 9z" {...fillP} /></>,
    ],
  },
];

function ToolSection({ title, icons, cols = "grid-cols-3 w-[135px]" }) {
  return (
    <section>
      <h3 className="text-lg leading-6 text-black">{title}</h3>
      <div className={`mt-1 -ml-1 grid ${cols}`}>
        {icons.map((icon, i) => (
          <button key={i} aria-label={`${title} ${i + 1}`} className="flex h-9 items-center justify-center">
            <Svg w={22} h={22} sw={1.1} stroke="#e3bcc6">{icon}</Svg>
          </button>
        ))}
      </div>
    </section>
  );
}

const RADIO =
  "h-[27px] w-[27px] appearance-none rounded-full border-[3px] border-[#c6c6c6] bg-[#f2f2f2] checked:bg-[radial-gradient(circle,#a3a3a3_0_7px,#f4f4f4_8px)]";

function DesignPane() {
  const [fit, setFit] = useState("自由调整");
  return (
    <aside className="flex w-[431px] shrink-0 flex-col pr-2 pb-[7px] pl-[7px]">
      <div className="flex h-[57px] shrink-0 items-center pt-3 pl-[9px]">
        <h2 className="text-[32px] leading-10 text-[#b5241c]">设计工具</h2>
        <button aria-label="窗格选项" className="mb-1 ml-auto"><svg width="14" height="8" aria-hidden="true"><path d="M0 0h14L7 8z" fill="#666" /></svg></button>
        <button aria-label="关闭窗格" className="mr-4 mb-1 ml-[47px]"><Svg w={16} h={16} sw={3} stroke="#666"><path d="M2 2l12 12M14 2L2 14" /></Svg></button>
      </div>
      <div className="flex min-h-0 flex-1 overflow-hidden bg-white pt-6 pr-1 pl-6">
        <div className="flex-1">
          <div className="grid grid-cols-[147px_1fr] gap-y-3.5">
            {TOOLS.map((t) => <ToolSection key={t.title} {...t} />)}
          </div>
          <fieldset className="mt-[13px]">
            <legend className="text-lg leading-6 text-black">文本框</legend>
            <div className="mt-[3px] grid grid-cols-[139px_1fr] text-lg leading-6 text-[#b4b4b4]">
              {["自由调整", "根据文字", "溢出缩排"].map((t) => (
                <label key={t} className="flex h-12 items-center gap-1.5">
                  <input type="radio" name="fit" checked={fit === t} onChange={() => setFit(t)} className={RADIO} />
                  {t}
                </label>
              ))}
              <label className="flex h-12 items-center gap-2">
                <input type="checkbox" className="h-[27px] w-[27px] appearance-none border-[3px] border-[#c6c6c6] bg-[#f2f2f2]" />
                自动换行
              </label>
            </div>
          </fieldset>
        </div>
        <div className="h-[503px] w-[5px] bg-[#e6e6e6]" />
      </div>
    </aside>
  );
}

/* ---------- status bar and taskbar ---------- */

function StatusBar() {
  const [zoom, setZoom] = useState(28);
  return (
    <footer className="flex h-[33px] shrink-0 items-center border-t border-[#c8c8c8] bg-[#f3f2f1] pb-0.5 pl-2 text-lg leading-6 text-[#555]">
      <span>幻灯片 第 15 张，共 20 张</span>
      <button aria-label="拼写检查" className="ml-6">
        <Svg w={22} h={18} sw={1.2}><path d="M10 3v14M10 3C7 1 4 1 1 1v14c3 0 6 0 9 2 3-2 5-2 8-2v-3M10 3c3-2 5-2 8-2v3" /><path d="M12 8l3 4 6-7" strokeWidth="2.500" /></Svg>
      </button>
      <button className="ml-[18px]">中文(中国)</button>
      <button className="ml-auto flex items-center gap-1.5">
        <Svg w={18} h={15} sw={1.4}><path d="M0 6h18M0 10h18M0 14h18M6 3.500L9 1l3 2.500" /></Svg>
        备注
      </button>
      <div className="-mb-0.5 ml-6 flex h-8 items-center">
        <button aria-label="普通视图" className="flex h-full w-[43px] items-center justify-center bg-[#cfcecd]">
          <Svg w={20} h={19} sw={1.2}><path d="M1 1h18v17H1zM5 1v17M5 13h14M9 4h7v6H9zM1 5h4M1 9h4" /></Svg>
        </button>
        <button aria-label="幻灯片浏览" className="ml-[13px]"><Svg w={20} h={19} sw={1.3}><path d="M1 1h7v7H1zM12 1h7v7h-7zM1 11h7v7H1zM12 11h7v7h-7z" /></Svg></button>
        <button aria-label="阅读视图" className="ml-[25px]"><Svg w={20} h={19} sw={1.2}><path d="M10 3v15M10 2H1v14h7l2 2 2-2h7V2h-9M3 5h5M3 8h5M3 11h5M12 5h5M12 8h5M12 11h5" /></Svg></button>
        <button aria-label="幻灯片放映" className="ml-[25px]"><Svg w={20} h={19} sw={1.3}><path d="M0 1h20M2 1v10h16V1M10 11v7M6 18h8M6 5h8" /></Svg></button>
        <button aria-label="缩小" className="ml-[17px] flex h-6 w-3 items-center"><span className="block h-[3px] w-full bg-[#666]" /></button>
        <div className="relative ml-1.5 flex w-[148px] items-center">
          <span className="absolute left-1/2 h-2 w-px bg-[#999]" />
          <input
            type="range"
            aria-label="显示比例"
            value={zoom}
            onChange={(e) => setZoom(e.target.value)}
            className="relative h-4 w-full appearance-none bg-[linear-gradient(#a0a0a0,#a0a0a0)] bg-[length:100%_1px] bg-center bg-no-repeat [&::-webkit-slider-thumb]:h-4 [&::-webkit-slider-thumb]:w-2 [&::-webkit-slider-thumb]:appearance-none [&::-webkit-slider-thumb]:bg-[#666]"
          />
        </div>
        <button aria-label="放大" className="ml-1.5"><Svg w={12} h={12} sw={2.5}><path d="M0 6h12M6 0v12" /></Svg></button>
        <button className="ml-3 w-[46px] text-left">61%</button>
        <button aria-label="适应窗口" className="mr-[9px] ml-2.5"><Svg w={18} h={18} sw={1.1}><path d="M1 1h16v16H1zM9 2v4M9 12v4M2 9h4M12 9h4M7 4l2-2 2 2M7 14l2 2 2-2M4 7L2 9l2 2M14 7l2 2-2 2" /></Svg></button>
      </div>
    </footer>
  );
}

const APPS = [
  { name: "Camtasia", icon: <><rect width="24" height="24" rx="2" fill="#e8483a" /><path d="M19 5h-9C7 5 5 7 5 10v4c0 3 2 5 5 5h9" fill="none" stroke="#fff" strokeWidth="3.500" /></> },
  { name: "文件资源管理器", icon: <><path d="M1 3h8l2 3h12v15H1z" fill="#f2c14e" /><path d="M1 9h22v12H1z" fill="#fbd873" /><path d="M5 21v-7h13v7h-4v-3h-5v3z" fill="#3b93d6" /></> },
  { name: "浏览器", icon: <><circle cx="12" cy="12" r="11" fill="#55b52f" stroke="#d8efcc" strokeWidth="1.500" /><path d="M12 4l5 5H7zM12 20l5-5H7zM5 11h14v2H5z" fill="#fff" /></> },
  { name: "搜索", icon: <><path d="M1 1h22v17H1z" fill="#d9e3ea" /><path d="M1 1h22v4H1z" fill="#5b93c7" /><circle cx="14" cy="12" r="5.500" fill="#bcd9ef" stroke="#6b7b88" strokeWidth="1.500" /><path d="M10 16l-7 7" stroke="#c58b52" strokeWidth="4" /></> },
  { name: "取色器", wheel: true },
  { name: "视频工具", icon: <><rect width="24" height="24" fill="#4457b0" /><path d="M3 3h4l5 7v4l-5 5H3z" fill="#fff" /><path d="M21 3l-9 9 9 8z" fill="#9aa3b3" /><path d="M12 10l9 10h-5l-4-5z" fill="#cdd3dc" /></> },
  { name: "AnyDesk", open: true, icon: <><rect width="24" height="24" fill="#ef3e36" /><path d="M5 12l5-5 5 5-5 5z" fill="#fff" /><path d="M13 7l5 5-5 5" stroke="#fff" strokeWidth="2" fill="none" /></> },
  { name: "PowerPoint", open: true, active: true, icon: <><path d="M10 3h13v17H10z" fill="#fff" stroke="#c8452b" /><path d="M16 6v4h4M14 14h7M14 17h7" stroke="#c8452b" strokeWidth="1.500" fill="none" /><path d="M0 3l13-2v22L0 21z" fill="#d04424" /><path d="M4.500 17V8h2.500c4 0 4 5 0 5H5" stroke="#fff" strokeWidth="2" fill="none" /></> },
];

function Taskbar() {
  return (
    <div className="flex h-11 shrink-0 items-center bg-[#1e1e1e] text-white">
      <button aria-label="开始" className="flex w-[57px] justify-center pr-1">
        <Svg w={25} h={24} fill="#fff" stroke="none"><path d="M0 3l11-1.500V11H0zM12 1.300L25 0v11H12zM0 12h11v9.500L0 20zM12 12h13v12l-13-1.800z" /></Svg>
      </button>
      {APPS.map((a) => (
        <button
          key={a.name}
          aria-label={a.name}
          className={`flex h-full w-[57px] flex-col items-center justify-end ${a.active ? "bg-[#4a4a4a]" : ""}`}
        >
          <span className="flex flex-1 items-center pt-0.5">
            {a.wheel ? (
              <span className="flex h-[22px] w-[22px] items-center justify-center rounded-full bg-[conic-gradient(#f33,#f3f,#33f,#3ff,#3f3,#ff3,#f33)]">
                <span className="h-2 w-2 rounded-full bg-white" />
              </span>
            ) : (
              <Svg w={24} h={24} stroke="none">{a.icon}</Svg>
            )}
          </span>
          {a.open && <span className={`h-0.5 bg-[#b5b5b5] ${a.active ? "w-full" : "w-[42px]"}`} />}
        </button>
      ))}
      <div className="ml-auto flex h-full items-center">
        <button aria-label="显示隐藏的图标"><Svg w={20} h={11}><path d="M1 10l9-8 9 8" /></Svg></button>
        <button aria-label="电源" className="ml-[13px]"><Svg w={25} h={20}><path d="M7 5h15v11H5v-4M23 8v5M1 5h6v3c0 2-1 3-3 3s-3-1-3-3zM2 5V1M6 5V1" /><path d="M11 8h9v6h-9z" fill="#fff" stroke="none" /></Svg></button>
        <button aria-label="网络" className="ml-3.5"><Svg w={21} h={20}><path d="M1 19C1 9 9 1 20 1" stroke="#777" /><path d="M5 19C6 11 11 6 20 5.500M9 19c1-5 5-9 11-9M14 19c0-2 2-5 6-5" /><circle cx="18" cy="18" r="1.500" fill="#fff" stroke="none" /></Svg></button>
        <button aria-label="音量" className="ml-3"><Svg w={23} h={20}><path d="M1 7h4l5-5v16l-5-5H1zM13 7c2 2 2 4 0 6M16 4c4 4 4 8 0 12" /><path d="M19 2c5 5 5 11 0 16" stroke="#777" /></Svg></button>
        <button className="ml-3 text-[22px] leading-6">中</button>
        <button aria-label="搜狗输入法" className="ml-5">
          <Svg w={25} h={24} stroke="none"><path d="M3 3l19-2 3 15-5 7-16 1L0 15z" fill="#f0592b" /><path d="M18 7c-4-3-11-1-10 2s9 2 9 5-7 4-11 1" fill="none" stroke="#fff" strokeWidth="3" /></Svg>
        </button>
        <button aria-label="M" className="ml-[41px]"><Svg w={20} h={16} sw={2}><path d="M1 1v15M19 1v15" /><path d="M5 16V4l5 6 5-6v12" strokeWidth="2.800" /></Svg></button>
        <button aria-label="通知" className="ml-[43px]"><Svg w={25} h={24} sw={1.6}><path d="M1 1h23v18h-7l-4.500 4L8 19H1z" /></Svg></button>
        <span className="ml-[31px] h-full w-px bg-[#666]" />
        <span className="w-1.5" />
      </div>
    </div>
  );
}

function App() {
  return (
    <div className="flex h-screen flex-col overflow-hidden bg-[#e6e6e6] font-['Open_Sans','Noto_Sans_CJK_SC',sans-serif]">
      <TitleBar />
      <TabRow />
      <Ribbon />
      <div className="flex min-h-0 flex-1">
        <ThumbPanel />
        <Editor />
        <DesignPane />
      </div>
      <StatusBar />
      <Taskbar />
    </div>
  );
}

export default App;
